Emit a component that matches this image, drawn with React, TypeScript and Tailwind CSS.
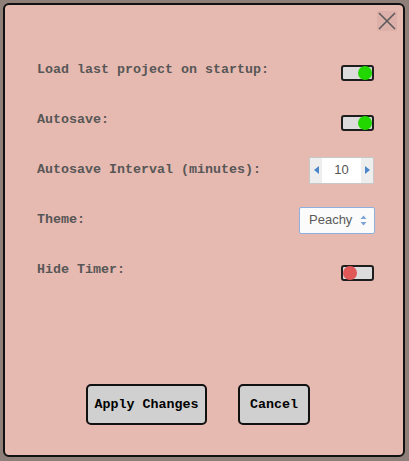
import React, { useState } from 'react';

const mono = { fontFamily: '"Liberation Mono", "Courier New", monospace' };

type ToggleProps = { on: boolean; onClick: () => void };

const Toggle: React.FC<ToggleProps> = ({ on, onClick }) => (
  <button
    onClick={onClick}
    className={`mt-[5px] mr-[1px] flex h-[16px] w-[33px] items-center rounded-[3px] border-2 border-[#1e1e1e] bg-[#dcdcdc] ${on ? 'justify-end' : 'justify-start'}`}
  >
    <span
      className={`h-[14px] w-[14px] rounded-full ${on ? 'bg-[#22d600]' : 'bg-[#e05858]'}`}
    ></span>
  </button>
);

const Row: React.FC<{ label: string; children: React.ReactNode }> = ({
  label,
  children,
}) => (
  <div className="flex h-[50px] items-center justify-between">
    <span className="text-[13.33px] font-bold text-[#575757]" style={mono}>
      {label}
    </span>
    {children}
  </div>
);

export default function App() {
  const [loadLast, setLoadLast] = useState(true);
  const [autosave, setAutosave] = useState(true);
  const [hideTimer, setHideTimer] = useState(false);
  const [interval, setIntervalValue] = useState(10);

  return (
    <div className="min-h-[461px] w-[409px] bg-[#8e8079] p-[3px] pr-[4px]">
      <div className="flex h-[454px] w-[402px] flex-col rounded-[6px] border-2 border-[#111] bg-[#e7bab1]">
        {/* header */}
        <div className="flex justify-end pt-[6px] pr-[6px]">
          <button className="flex h-[20px] w-[20px] items-center justify-center bg-[#ddb1a9]">
            <svg width="18" height="18" viewBox="0 0 18 18">
              <path
                d="M1 1 L17 17 M17 1 L1 17"
                stroke="#5a5a5a"
                strokeWidth="1.6"
                fill="none"
              />
            </svg>
          </button>
        </div>

        {/* settings */}
        <div className="mt-[14px] flex flex-col pr-[28px] pl-[32px]">
          <Row label="Load last project on startup:">
            <Toggle on={loadLast} onClick={() => setLoadLast(!loadLast)} />
          </Row>
          <Row label="Autosave:">
            <Toggle on={autosave} onClick={() => setAutosave(!autosave)} />
          </Row>
          <Row label="Autosave Interval (minutes):">
            <div
              className="mr-[1px] flex h-[27px] w-[65px] items-stretch border border-[#c8c8c8] bg-white text-[13px] text-[#555]"
              style={{ fontFamily: '"Liberation Sans", Arial, sans-serif' }}
            >
              <button
                onClick={() => setIntervalValue(interval - 1)}
                className="flex w-[12px] items-center justify-center bg-[#eeeeee]"
              >
                <svg width="5" height="8" viewBox="0 0 5 8">
                  <path d="M5 0 L0 4 L5 8 Z" fill="#4a86c8" />
                </svg>
              </button>
              <span className="flex flex-1 items-center justify-center">
                {interval}
              </span>
              <button
                onClick={() => setIntervalValue(interval + 1)}
                className="flex w-[12px] items-center justify-center bg-[#eeeeee]"
              >
                <svg width="5" height="8" viewBox="0 0 5 8">
                  <path d="M0 0 L5 4 L0 8 Z" fill="#4a86c8" />
                </svg>
              </button>
            </div>
          </Row>
          <Row label="Theme:">
            <div
              className="flex h-[27px] w-[76px] items-center justify-between rounded-[2px] border border-[#8eb0df] bg-[#fbfbfb] pr-[7px] pl-[9px] text-[13px] text-[#5a5a5a]"
              style={{ fontFamily: '"Liberation Sans", Arial, sans-serif' }}
            >
              <span>Peachy</span>
              <svg width="7" height="11" viewBox="0 0 7 11">
                <path d="M0.5 4 L3.5 0.5 L6.5 4 Z" fill="#7ea3d4" />
                <path d="M0.5 7 L3.5 10.5 L6.5 7 Z" fill="#7ea3d4" />
              </svg>
            </div>
          </Row>
          <Row label="Hide Timer:">
            <Toggle on={hideTimer} onClick={() => setHideTimer(!hideTimer)} />
          </Row>
        </div>

        {/* footer */}
        <div className="mt-auto flex justify-center gap-[31px] pr-[12px] pb-[30px]">
          <button
            className="h-[41px] w-[121px] rounded-[5px] border-2 border-[#111] bg-[#d0d0d0] text-[13.33px] font-bold text-black"
            style={mono}
          >
            Apply Changes
          </button>
          <button
            className="h-[41px] w-[72px] rounded-[5px] border-2 border-[#111] bg-[#d0d0d0] text-[13.33px] font-bold text-black"
            style={mono}
          >
            Cancel
          </button>
        </div>
      </div>
    </div>
  );
}
